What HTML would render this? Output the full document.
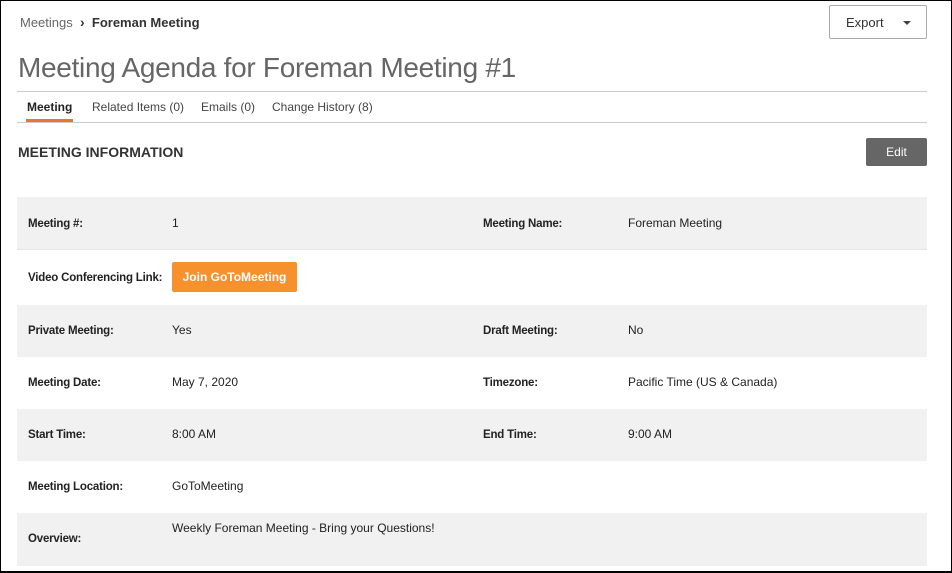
<!DOCTYPE html>
<html><head><style>
*{margin:0;padding:0;box-sizing:border-box}
body{width:952px;height:573px;background:#fff;font-family:"Liberation Sans",sans-serif;color:#222;position:relative;overflow:hidden}
.frame{position:absolute;left:0;top:0;width:952px;height:573px;border:1px solid #000;border-bottom:2px solid #000}
.abs{position:absolute;white-space:nowrap}
.crumb{left:20px;top:14px;font-size:13px;color:#666}
.crumb b{color:#333;font-weight:bold}
.title{left:18px;top:52px;font-size:28px;color:#666;font-weight:300;letter-spacing:-0.3px}
.hr{position:absolute;left:17px;width:910px;height:1px;background:#ccc}
.tab{top:100px;font-size:12px;color:#444}
.export{left:829px;top:5px;width:98px;height:34px;border:1px solid #aaa;border-radius:2px;font-size:13px;color:#333;padding:9px 0 0 16px}
.export:after{content:"";position:absolute;left:73px;top:15px;border:4px solid transparent;border-top:4px solid #444;border-bottom:0}
.edit{left:866px;top:138px;width:61px;height:28px;background:#666;border-radius:2px;color:#fff;font-size:12px;text-align:center;line-height:28px}
.sec{left:18px;top:144px;font-size:14px;font-weight:bold;color:#333}
.row{position:absolute;left:17px;width:910px}
.g{background:#f1f1f1}
.l{font-size:11.5px;font-weight:bold;color:#222;letter-spacing:-0.2px;margin-top:2px}
.v{font-size:12px;color:#222}
.join{left:172px;top:262px;width:125px;height:30px;background:#f7912e;border-radius:2px;color:#fff;font-size:12px;font-weight:bold;text-align:center;line-height:30px}
</style></head><body>
<div class="frame"></div>
<div class="abs crumb">Meetings&nbsp;&nbsp;<b style="font-size:14px">›</b>&nbsp;&nbsp;<b>Foreman Meeting</b></div>
<div class="abs export">Export</div>
<div class="abs title">Meeting Agenda for Foreman Meeting #1</div>
<div class="hr" style="top:91px"></div>
<div class="abs tab" style="left:27px;font-weight:bold;color:#222">Meeting</div>
<div style="position:absolute;left:26px;top:119px;width:47px;height:3px;background:#e8743b"></div>
<div class="abs tab" style="left:92px">Related Items (0)</div>
<div class="abs tab" style="left:201px">Emails (0)</div>
<div class="abs tab" style="left:272px">Change History (8)</div>
<div class="hr" style="top:122px"></div>
<div class="abs sec">MEETING INFORMATION</div>
<div class="abs edit">Edit</div>

<div class="row g" style="top:197px;height:52px"></div>
<div class="row" style="top:249px;height:56px;border-top:1px solid #e6e6e6"></div>
<div class="row g" style="top:305px;height:52px"></div>
<div class="row" style="top:357px;height:52px"></div>
<div class="row g" style="top:409px;height:52px"></div>
<div class="row" style="top:461px;height:52px"></div>
<div class="row g" style="top:513px;height:53px"></div>

<div class="abs l" style="left:28px;top:216px">Meeting #:</div>
<div class="abs v" style="left:172px;top:216px">1</div>
<div class="abs l" style="left:483px;top:216px">Meeting Name:</div>
<div class="abs v" style="left:628px;top:216px">Foreman Meeting</div>

<div class="abs l" style="left:28px;top:270px">Video Conferencing Link:</div>
<div class="abs join">Join GoToMeeting</div>

<div class="abs l" style="left:28px;top:323px">Private Meeting:</div>
<div class="abs v" style="left:172px;top:323px">Yes</div>
<div class="abs l" style="left:483px;top:323px">Draft Meeting:</div>
<div class="abs v" style="left:628px;top:323px">No</div>

<div class="abs l" style="left:28px;top:375px">Meeting Date:</div>
<div class="abs v" style="left:172px;top:375px">May 7, 2020</div>
<div class="abs l" style="left:483px;top:375px">Timezone:</div>
<div class="abs v" style="left:628px;top:375px">Pacific Time (US &amp; Canada)</div>

<div class="abs l" style="left:28px;top:427px">Start Time:</div>
<div class="abs v" style="left:172px;top:427px">8:00 AM</div>
<div class="abs l" style="left:483px;top:427px">End Time:</div>
<div class="abs v" style="left:628px;top:427px">9:00 AM</div>

<div class="abs l" style="left:28px;top:479px">Meeting Location:</div>
<div class="abs v" style="left:172px;top:479px">GoToMeeting</div>

<div class="abs l" style="left:28px;top:531px">Overview:</div>
<div class="abs v" style="left:172px;top:521px">Weekly Foreman Meeting - Bring your Questions!</div>
</body></html>
